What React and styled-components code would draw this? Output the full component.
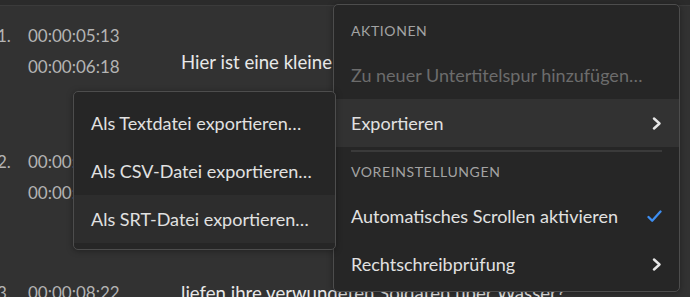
import React from 'react';
import styled, { createGlobalStyle } from 'styled-components';

const GlobalStyle = createGlobalStyle`
  html, body {
    margin: 0;
    padding: 0;
    background: #323232;
    overflow: hidden;
  }
  * { box-sizing: border-box; }
`;

// gap = space above each row
const captions = [
  { n: '1.', start: '00:00:05:13', end: '00:00:06:18', text: 'Hier ist eine kleine Geschichte über den Krieg', gap: 14, down: 26 },
  { n: '2.', start: '00:00:06:19', end: '00:00:08:21', text: 'Wie konnten sie das schaffen?', gap: 64, down: 26 },
  { n: '3.', start: '00:00:08:22', end: '00:00:10:02', text: 'liefen ihre verwundeten Soldaten über Wasser?', gap: 69, down: 0 },
];

const Chevron = () => (
  <svg width="10" height="13" viewBox="0 0 10 13">
    <path d="M2 1.5 L7.5 6.5 L2 11.5" fill="none" stroke="#e6e6e6" strokeWidth="2.4" strokeLinecap="round" strokeLinejoin="round" />
  </svg>
);

const Check = () => (
  <svg width="15" height="13" viewBox="0 0 15 13">
    <path d="M1.5 7 L5.2 10.8 L13.5 1.5" fill="none" stroke="#3d8ef2" strokeWidth="2.3" strokeLinecap="round" strokeLinejoin="round" />
  </svg>
);

export default function App() {
  return (
    <Page>
      <GlobalStyle />
      <TopBar />
      <List>
        {captions.map((c, i) => (
          <Row key={i} $gap={c.gap}>
            <Num>{c.n}</Num>
            <Times>
              <span>{c.start}</span>
              <span>{c.end}</span>
            </Times>
            <Caption $down={c.down}>{c.text}</Caption>
          </Row>
        ))}
      </List>

      <SubMenu>
        <Item>Als Textdatei exportieren…</Item>
        <Item>Als CSV-Datei exportieren…</Item>
        <Item $hover $subtle>Als SRT-Datei exportieren…</Item>
      </SubMenu>

      <Menu>
        <Header>AKTIONEN</Header>
        <Item $disabled>Zu neuer Untertitelspur hinzufügen…</Item>
        <Item $hover>
          Exportieren
          <Chevron />
        </Item>
        <Divider />
        <Header>VOREINSTELLUNGEN</Header>
        <Item>
          Automatisches Scrollen aktivieren
          <Check />
        </Item>
        <Item>
          Rechtschreibprüfung
          <Chevron />
        </Item>
      </Menu>
    </Page>
  );
}

const Page = styled.div`
  position: relative;
  width: 690px;
  height: 297px;
  overflow: hidden;
  background: #323232;
  font-family: Lato, "Open Sans", sans-serif;
`;

const TopBar = styled.div`
  height: 6px;
  background: #2b2b2b;
  border-bottom: 1px solid #3b3b3b;
`;

const List = styled.div`
  display: flex;
  flex-direction: column;
`;

const Row = styled.div`
  display: grid;
  grid-template-columns: 28px 156px 1fr;
  align-items: start;
  margin-top: ${p => p.$gap}px;
  margin-left: -3px;
`;

const Num = styled.div`
  font-size: 17px;
  line-height: 31px;
  color: #b4b4b4;
`;

const Times = styled.div`
  display: flex;
  flex-direction: column;
  margin-left: 3px;
  font-size: 17px;
  line-height: 31px;
  color: #b4b4b4;
  white-space: nowrap;
`;

const Caption = styled.div`
  margin-top: ${p => p.$down}px;
  font-size: 18.6px;
  line-height: 32px;
  color: #e8e8e8;
  white-space: nowrap;
`;

const MenuBase = styled.div`
  position: absolute;
  display: flex;
  flex-direction: column;
  background: #262626;
  border: 1px solid #4d4d4d;
  border-radius: 5px;
  box-shadow: 0 1px 6px rgba(0, 0, 0, 0.35);
`;

const Menu = styled(MenuBase)`
  left: 333px;
  top: 4px;
  width: 347px;
  padding: 6px 0 3px;
`;

const SubMenu = styled(MenuBase)`
  left: 73px;
  top: 91px;
  width: 263px;
  padding: 7px 0 6px;
  z-index: 2;
`;

const Header = styled.div`
  height: 40px;
  line-height: 40px;
  padding: 0 17px;
  font-size: 14px;
  letter-spacing: 0.6px;
  color: #a3a3a3;
`;

const Item = styled.div`
  display: flex;
  align-items: center;
  justify-content: space-between;
  height: 48px;
  padding: 0 17px;
  font-size: 18px;
  white-space: nowrap;
  color: ${p => (p.$disabled ? '#6c6c6c' : '#e1e1e1')};
  background: ${p => (p.$hover ? (p.$subtle ? '#2d2d2d' : '#323232') : 'transparent')};
`;

const Divider = styled.div`
  height: 2px;
  margin: 3px 17px 0;
  background: #3a3a3a;
`;
